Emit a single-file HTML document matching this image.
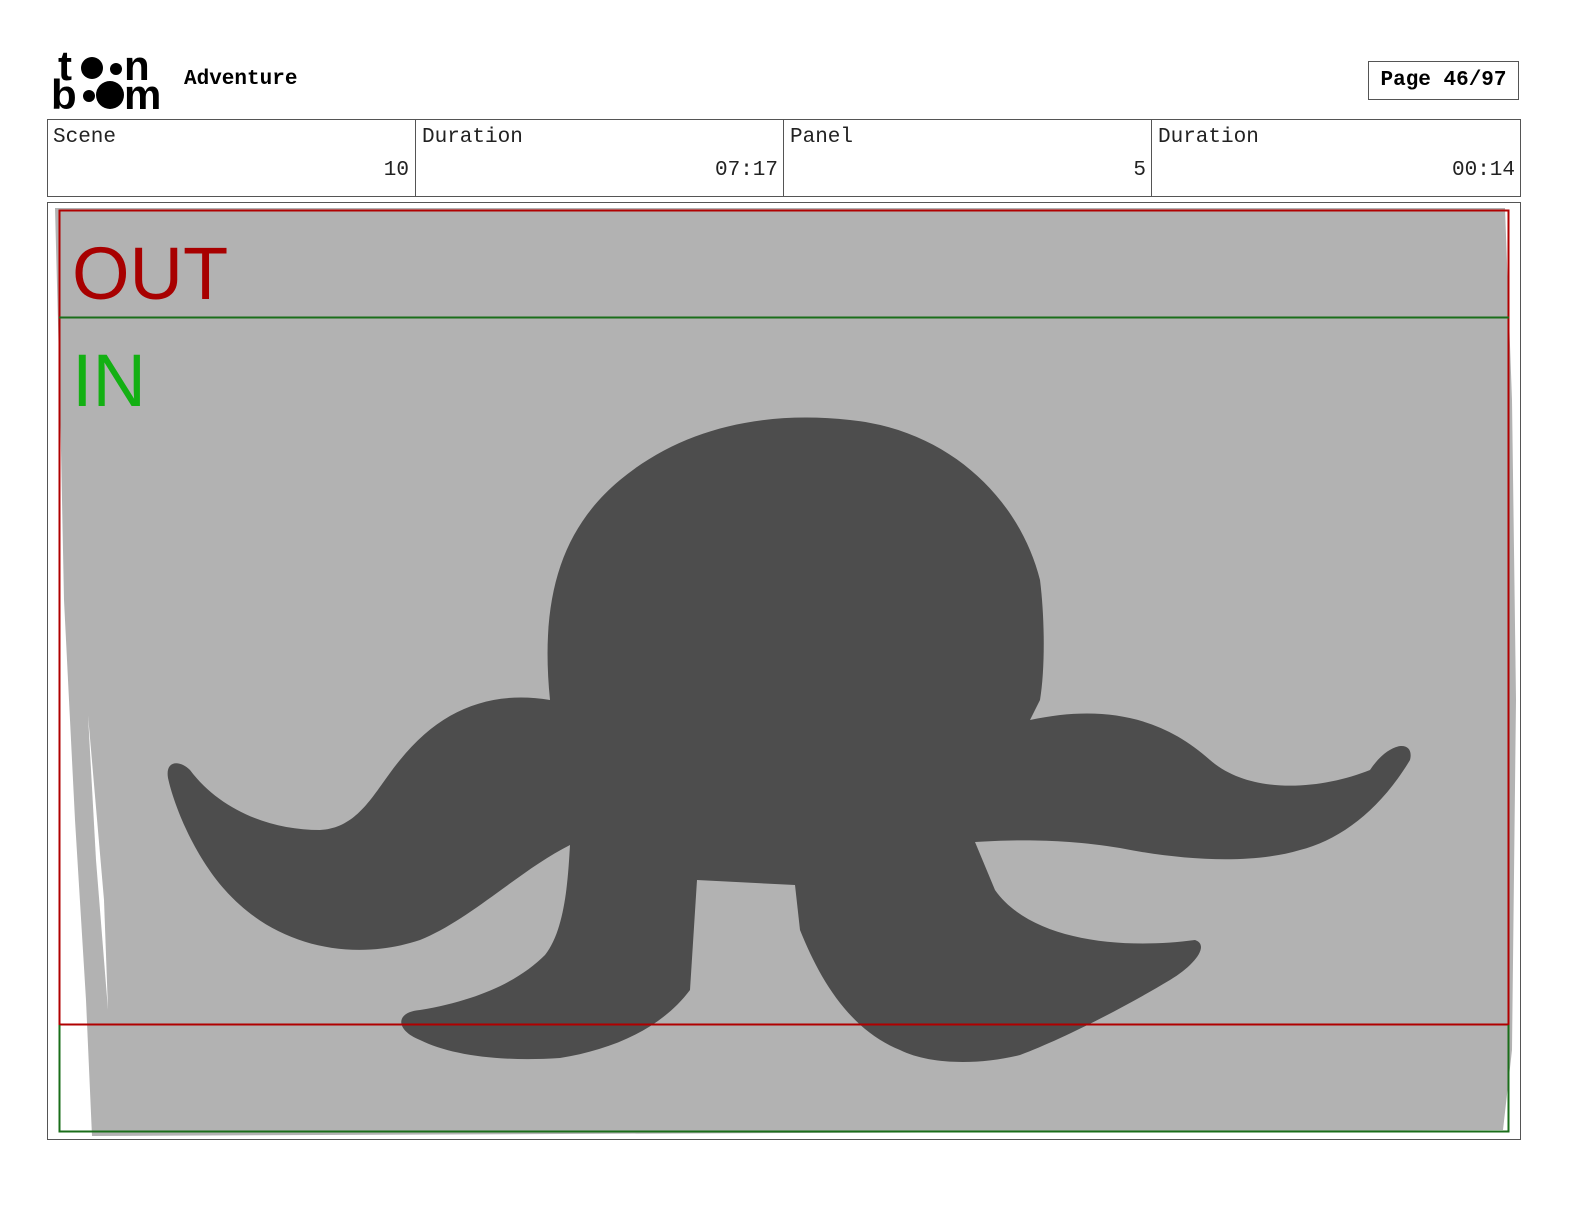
<!DOCTYPE html>
<html style="overflow:hidden"><head><meta charset="utf-8"><style>
html,body{margin:0;padding:0;overflow:hidden}
body{background:#fff;width:1584px;height:1224px;position:relative;font-family:"Liberation Mono",monospace}
.a{position:absolute;display:block}
.cell{position:absolute;top:120px;height:76px;border-left:1px solid #555;font-size:21px;color:#222}
.cell .l{position:absolute;left:6px;top:6px}
.cell .v{position:absolute;right:6px;top:39px}
</style></head><body>
<svg class="a" style="left:0;top:0" width="180" height="120">
<text x="58" y="80" font-family="Liberation Sans" font-weight="bold" font-size="42">t</text>
<circle cx="92" cy="68" r="11"/><circle cx="116" cy="69" r="6"/>
<text x="124" y="80" font-family="Liberation Sans" font-weight="bold" font-size="42">n</text>
<text x="51" y="109" font-family="Liberation Sans" font-weight="bold" font-size="42">b</text>
<circle cx="89" cy="96" r="6"/><circle cx="110" cy="95" r="14"/>
<text x="124" y="109" font-family="Liberation Sans" font-weight="bold" font-size="42" textLength="38">m</text>
</svg>
<div class="a" style="left:184px;top:68px;font-size:21px;font-weight:bold">Adventure</div>
<div class="a" style="left:1368px;top:61px;width:151px;height:39px;border:1px solid #555;box-sizing:border-box;font-size:21px;font-weight:bold;line-height:37px;text-align:center">Page 46/97</div>
<div class="a" style="left:47px;top:119px;width:1474px;height:78px;border:1px solid #555;box-sizing:border-box"></div>
<div class="cell" style="left:47px;width:368px;border-left:none"><span class="l">Scene</span><span class="v">10</span></div>
<div class="cell" style="left:415px;width:368px"><span class="l">Duration</span><span class="v">07:17</span></div>
<div class="cell" style="left:783px;width:368px"><span class="l">Panel</span><span class="v">5</span></div>
<div class="cell" style="left:1151px;width:369px"><span class="l">Duration</span><span class="v">00:14</span></div>
<svg class="a" style="left:0;top:0" width="1584" height="1224">
<rect x="47.5" y="202.5" width="1473" height="937" fill="#fff" stroke="#555"/>
<path d="M55 208 L1505 208 L1512 400 L1516 700 L1512 1050 L1503 1130 L92 1136 L86 1000 L75 820 L64 600 L60 400 Z" fill="#b2b2b2"/>
<path d="M88 715 L96 860 L108 1010 L104 900 Z" fill="#fff"/>
<g fill="#4d4d4d">
<path d="M550 700 C540 600 560 530 620 480 C680 430 760 410 850 420 C950 430 1020 500 1040 580 C1045 620 1045 670 1040 700 L1030 720 C1100 705 1160 715 1210 760 C1250 795 1320 790 1370 770 C1390 740 1415 740 1410 760 C1380 810 1340 840 1300 850 C1250 865 1180 860 1120 848 C1060 838 1010 840 975 842 L995 890 C1030 940 1120 950 1195 940 C1210 945 1195 965 1170 980 C1120 1010 1060 1040 1020 1055 C980 1065 930 1065 900 1050 C850 1030 820 980 800 930 L795 885 L697 880 L690 990 C660 1030 610 1050 560 1058 C500 1062 450 1055 420 1040 C395 1030 395 1012 420 1010 C480 1000 520 980 545 955 C565 930 568 880 570 845 C520 870 470 920 420 940 C360 960 290 950 240 905 C200 870 175 810 168 778 C165 760 180 760 190 770 C220 810 270 830 320 830 C360 828 375 790 400 760 C440 710 490 690 550 700 Z"/>
</g>
<rect x="59.5" y="210.5" width="1449" height="814" fill="none" stroke="#b00000" stroke-width="2"/>
<line x1="59" y1="317.5" x2="1509" y2="317.5" stroke="#1a6e1a" stroke-width="2"/>
<polyline points="59.5,1025 59.5,1131.5 1508.5,1131.5 1508.5,1025" fill="none" stroke="#1a6e1a" stroke-width="2"/>
<text x="72" y="299" font-family="Liberation Sans" font-size="74" fill="#a80000">OUT</text>
<text x="72" y="406" font-family="Liberation Sans" font-size="74" fill="#13b013">IN</text>
</svg>
</body></html>
